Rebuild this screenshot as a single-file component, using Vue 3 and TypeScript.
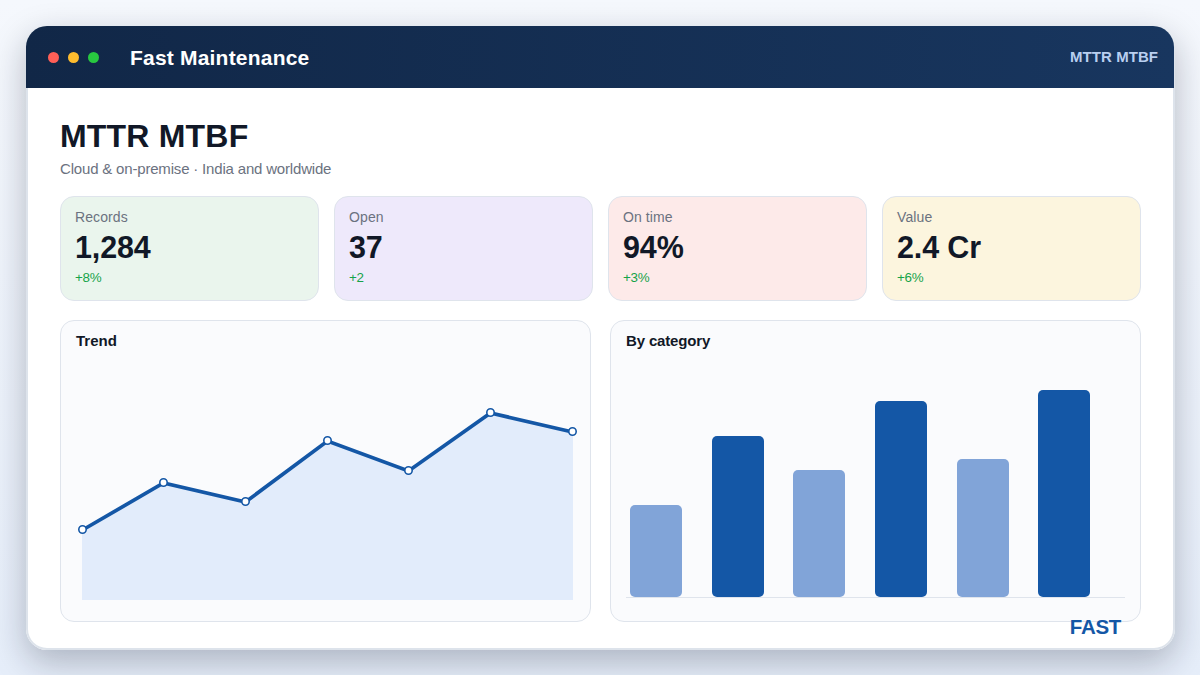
<script setup lang="ts">
interface Stat {
  label: string
  value: string
  delta: string
  tone: string
}
interface Point {
  x: number
  y: number
}
interface Bar {
  x: number
  height: number
  strong: boolean
}

const stats: Stat[] = [
  { label: 'Records', value: '1,284', delta: '+8%', tone: 'green' },
  { label: 'Open', value: '37', delta: '+2', tone: 'violet' },
  { label: 'On time', value: '94%', delta: '+3%', tone: 'red' },
  { label: 'Value', value: '2.4 Cr', delta: '+6%', tone: 'amber' },
]

const points: Point[] = [
  { x: 21.5, y: 178.5 },
  { x: 102.5, y: 131.5 },
  { x: 184.5, y: 150.5 },
  { x: 266.5, y: 89.5 },
  { x: 347.5, y: 119.5 },
  { x: 429.5, y: 61.5 },
  { x: 511.5, y: 80.5 },
]
const line = points.map((p) => `${p.x},${p.y + 0.5}`).join(' ')
const area = `21,249 21,179 ${line} 512,81 512,249`

const baseline = 246
const bars: Bar[] = [
  { x: 19, height: 92, strong: false },
  { x: 101, height: 161, strong: true },
  { x: 182, height: 127, strong: false },
  { x: 264, height: 196, strong: true },
  { x: 346, height: 138, strong: false },
  { x: 427, height: 207, strong: true },
]
</script>

<template>
  <div class="page">
    <div class="window">
      <header class="titlebar">
        <div class="lights">
          <span class="light close"></span>
          <span class="light minimise"></span>
          <span class="light expand"></span>
        </div>
        <span class="app-name">Fast Maintenance</span>
        <span class="module">MTTR MTBF</span>
      </header>
      <main class="content">
        <h1>MTTR MTBF</h1>
        <p class="subtitle">Cloud &amp; on-premise · India and worldwide</p>
        <section class="stats">
          <article v-for="s in stats" :key="s.label" class="stat" :class="s.tone">
            <div class="label">{{ s.label }}</div>
            <div class="value">{{ s.value }}</div>
            <div class="delta">{{ s.delta }}</div>
          </article>
        </section>
        <section class="panels">
          <article class="panel">
            <h2>Trend</h2>
            <svg class="chart" width="529" height="270" viewBox="0 0 529 270">
              <polygon :points="area" fill="#e2ecfb" />
              <polyline :points="line" fill="none" stroke="#1457a6" stroke-width="3.7" />
              <circle
                v-for="p in points"
                :key="p.x"
                :cx="p.x"
                :cy="p.y"
                r="3.7"
                fill="#fff"
                stroke="#1457a6"
                stroke-width="1.6"
              />
            </svg>
          </article>
          <article class="panel">
            <h2 class="tight">By category</h2>
            <svg class="chart" width="529" height="270" viewBox="0 0 529 270">
              <rect x="15" :y="baseline" width="499" height="1" fill="#dfe4ec" />
              <rect
                v-for="b in bars"
                :key="b.x"
                :x="b.x"
                :y="baseline - b.height"
                width="52"
                :height="b.height"
                rx="5"
                :fill="b.strong ? '#1457a6' : '#81a4d8'"
              />
            </svg>
          </article>
        </section>
      </main>
      <span class="brand">FAST</span>
    </div>
  </div>
</template>

<style>
body {
  margin: 0;
}
</style>

<style scoped>
.page {
  box-sizing: border-box;
  width: 1200px;
  height: 675px;
  padding: 26px 25px 25px 26px;
  overflow: hidden;
  background: linear-gradient(180deg, #f5f8fd, #e6eefa);
  font-family: 'Liberation Sans', Arial, sans-serif;
  color: #111827;
}
.window {
  position: relative;
  box-sizing: border-box;
  width: 1149px;
  height: 624px;
  border-radius: 21px;
  background: #fff;
  box-shadow: inset 0 0 0 2px #dde3eb, 0 12px 34px rgba(15, 20, 38, 0.27);
}
.titlebar {
  box-sizing: border-box;
  display: flex;
  align-items: center;
  width: 1148px;
  height: 62px;
  padding: 0 16px 0 22px;
  border-radius: 21px 21px 0 0;
  background: linear-gradient(90deg, #112747, #18365f);
}
.lights {
  display: flex;
  gap: 9px;
}
.light {
  width: 11px;
  height: 11px;
  border-radius: 50%;
}
.close {
  background: #ff5f57;
}
.minimise {
  background: #febc2e;
}
.expand {
  background: #28c840;
}
.app-name {
  margin-left: 31px;
  padding-top: 2px;
  color: #fff;
  font-size: 21px;
  font-weight: 700;
  letter-spacing: 0.2px;
  line-height: 24px;
}
.module {
  margin-left: auto;
  color: #b9cff0;
  font-size: 15px;
  font-weight: 700;
  letter-spacing: 0.05px;
  line-height: 18px;
}
.content {
  padding: 30px 34px 0;
}
h1 {
  margin: 0;
  font-size: 32px;
  line-height: 36px;
  letter-spacing: 0.2px;
}
.subtitle {
  margin: 6px 0 0;
  color: #6b7280;
  font-size: 15px;
  letter-spacing: -0.18px;
  line-height: 18px;
}
.stats {
  display: flex;
  gap: 15px;
  margin-top: 18px;
}
.stat {
  box-sizing: border-box;
  width: 259px;
  height: 105px;
  padding: 12px 14px;
  border: 1px solid #dfe4ec;
  border-radius: 14px;
}
.green {
  background: #eaf5ed;
}
.violet {
  background: #eee9fb;
}
.red {
  background: #fdeae9;
}
.amber {
  background: #fcf5de;
}
.label {
  color: #6b7280;
  font-size: 14px;
  letter-spacing: 0.1px;
  line-height: 16px;
}
.value {
  margin-top: 7px;
  font-size: 30.5px;
  font-weight: 700;
  letter-spacing: -0.15px;
  line-height: 30px;
}
.delta {
  margin-top: 8px;
  color: #16a34a;
  font-size: 13.4px;
  letter-spacing: -0.3px;
  line-height: 15px;
}
.panels {
  display: flex;
  gap: 19px;
  margin-top: 19px;
}
.panel {
  box-sizing: border-box;
  width: 531px;
  height: 302px;
  border: 1px solid #dfe4ec;
  border-radius: 14px;
  background: #fafbfd;
}
h2 {
  margin: 0;
  padding: 11px 15px 1px;
  font-size: 15px;
  line-height: 18px;
}
.tight {
  letter-spacing: -0.15px;
}
.chart {
  display: block;
}
.brand {
  position: absolute;
  right: 54px;
  bottom: 12px;
  color: #1457a6;
  font-size: 20.5px;
  font-weight: 700;
  letter-spacing: -0.3px;
  line-height: 22px;
}
</style>
